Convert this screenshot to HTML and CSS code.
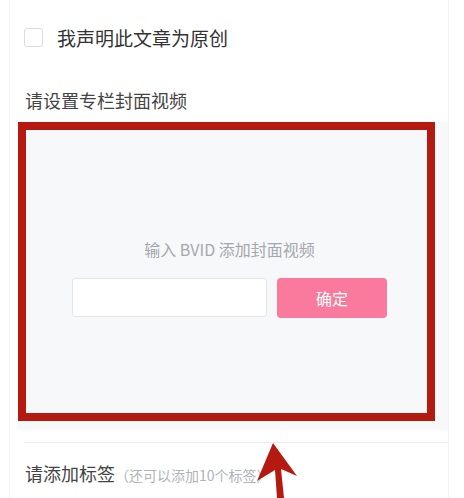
FILE: index.html
```html
<!DOCTYPE html>
<html lang="zh-CN">
<head>
    <meta charset="UTF-8">
    <meta name="viewport" content="width=device-width, initial-scale=1.0">
    <title>专栏设置</title>
    <link rel="stylesheet" href="styles.css">
</head>
<body>
    <div class="page">
        <label class="original-row">
            <span class="checkbox"></span>
            <span class="original-text">我声明此文章为原创</span>
        </label>

        <h2 class="section-title">请设置专栏封面视频</h2>

        <div class="cover-panel">
            <p class="cover-hint">输入 BVID 添加封面视频</p>
            <div class="cover-form">
                <input type="text" class="bvid-input">
                <button class="confirm-btn">确定</button>
            </div>
        </div>

        <div class="divider"></div>

        <h2 class="section-title tag-title">请添加标签<span class="tag-hint">（还可以添加10个标签）</span></h2>

        <div class="tag-row">
            <div class="tag-input"></div>
            <div class="tag-btn"></div>
        </div>
    </div>

    <!-- annotation overlays -->
    <div class="mark-box"></div>
    <svg class="mark-arrow" width="60" height="60" viewBox="0 0 60 60">
        <polygon points="23,0 7,38 25,27 27,55 34,55 31,26 47,33" fill="#b51a10"/>
    </svg>
</body>
</html>
```

FILE: styles.css
```css
body {
    margin: 0;
    background-color: #fff;
    font-family: "Noto Sans CJK SC", "Noto Sans", sans-serif;
    color: #333;
    overflow: hidden;
}
.page {
    margin-left: 9px;
    width: 438px;
    height: 498px;
    overflow: hidden;
    border-left: 1px solid #f2f2f2;
    border-right: 1px solid #f2f2f2;
}
.original-row {
    display: flex;
    align-items: center;
    padding-top: 28px;
    padding-left: 14px;
    height: 19px;
}
.checkbox {
    width: 17px;
    height: 17px;
    border: 1px solid #dcdcdc;
    border-radius: 3px;
    background-color: #fff;
}
.original-text {
    margin-left: 14px;
    font-size: 19px;
    line-height: 19px;
    color: #333;
}
.section-title {
    margin: 43px 0 0 15px;
    font-size: 18px;
    font-weight: normal;
    line-height: 20px;
    color: #444;
}
.cover-panel {
    margin: 12px 0 0 8px;
    width: 430px;
    height: 308px;
    box-sizing: border-box;
    padding-top: 117px;
    padding-right: 7px;
    background-color: #f7f8fa;
    display: flex;
    flex-direction: column;
    align-items: center;
}
.cover-hint {
    margin: 0;
    font-size: 16px;
    line-height: 20px;
    color: #a4a8ad;
}
.cover-form {
    display: flex;
    gap: 10px;
    margin-top: 19px;
}
.bvid-input {
    width: 195px;
    height: 39px;
    box-sizing: border-box;
    border: 1px solid #e6e6e6;
    border-radius: 3px;
    background-color: #fff;
    outline: none;
}
.confirm-btn {
    width: 110px;
    height: 40px;
    border: none;
    border-radius: 4px;
    background-color: #f97a9c;
    color: #fff;
    font-family: inherit;
    font-size: 16px;
}
.divider {
    margin: 12px 0 0 14px;
    height: 1px;
    background-color: #ececec;
}
.tag-title {
    margin-top: 18px;
    line-height: 24px;
}
.tag-hint {
    font-size: 14px;
    color: #b0b3b8;
}
.tag-row {
    display: flex;
    margin-top: 13px;
}
.tag-input {
    margin-left: 23px;
    width: 280px;
    height: 36px;
    box-sizing: border-box;
    border: 1px solid #e3e3e3;
    border-radius: 18px;
}
.tag-btn {
    margin-left: 37px;
    width: 78px;
    height: 36px;
    border-radius: 18px;
    background-color: #f97a9c;
}
.mark-box {
    position: absolute;
    left: 18px;
    top: 122px;
    width: 401px;
    height: 283px;
    border: 8px solid #b51a10;
}
.mark-arrow {
    position: absolute;
    left: 250px;
    top: 443px;
}
```
